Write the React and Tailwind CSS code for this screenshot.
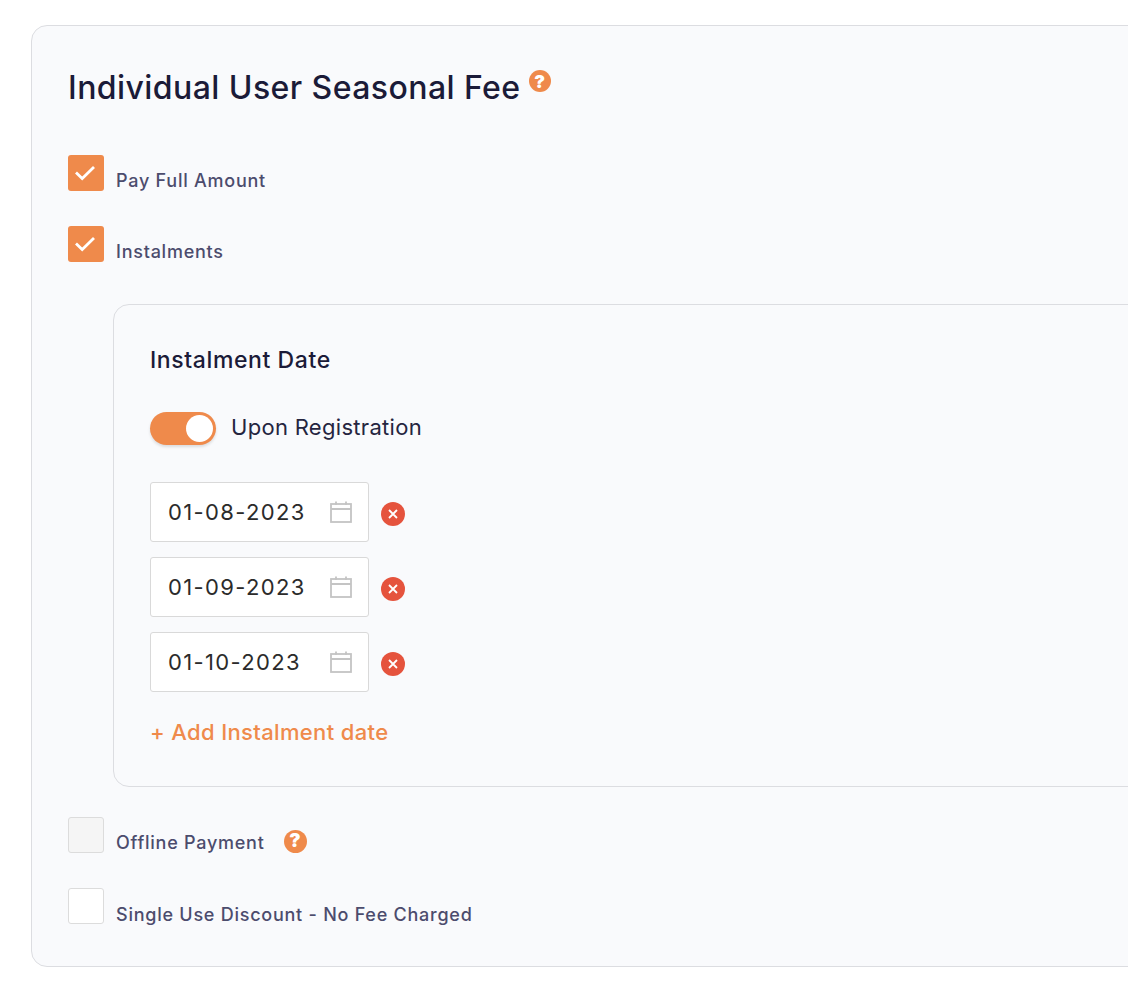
import React from "react";

const orange = "bg-[#ef8a4b]";

function Help({ className }) {
  return (
    <span className={`flex items-center justify-center rounded-full ${orange} text-white font-black ${className}`}>?</span>
  );
}

function Check({ checked, disabled, label, labelClass = "", children }) {
  return (
    <div className="flex items-end">
      <span
        className={`flex w-9 h-9 shrink-0 items-center justify-center rounded-[3px] ${
          checked ? orange : disabled ? "bg-[#f5f5f5] border border-[#dcdcdc]" : "bg-white border border-[#dcdcdc]"
        }`}
      >
        {checked && (
          <svg width="22" height="22" viewBox="0 0 22 22" fill="none" stroke="#fff" strokeWidth="2.8" className="-ml-[3px]">
            <path d="M2 10.5 L8.2 16.5 L20 5" />
          </svg>
        )}
      </span>
      <span className={`ml-3 -mb-px text-[18px] leading-[22px] tracking-[0.75px] font-[450] text-[#4c4c6d] ${labelClass}`}>{label}</span>
      {children}
    </div>
  );
}

function DateRow({ value }) {
  return (
    <div className="flex items-center">
      <div className="flex w-[219px] h-[60px] items-center justify-between bg-white border border-[#d9d9d9] rounded-[3px] pl-[17px] pr-[16px]">
        <span className="text-[22px] tracking-[1.35px] text-[#2b2b2b]">{value}</span>
        <svg width="22" height="22" viewBox="0 0 22 22" fill="none" stroke="#c4c4c4" strokeWidth="1.8">
          <rect x="1" y="3" width="20" height="18" />
          <path d="M1 8 H21 M6 0.5 V4 M16 0.5 V4" />
        </svg>
      </div>
      <span className="ml-3 mt-[3px] flex w-6 h-6 items-center justify-center rounded-full bg-[#e5533d]">
        <svg width="10" height="10" viewBox="0 0 10 10" stroke="#fff" strokeWidth="1.8">
          <path d="M1 1 L9 9 M9 1 L1 9" />
        </svg>
      </span>
    </div>
  );
}

export default function App() {
  return (
    <div className="h-[990px] w-[1128px] overflow-hidden bg-white pt-[25px] pl-[31px] font-['Inter',sans-serif]">
      <div className="w-[1200px] h-[942px] rounded-[16px] border border-[#dcdde1] bg-[#f9fafc] pt-[38px] pl-[36px]">
        <div className="flex items-start h-[48px]">
          <h1 className="text-[32px] leading-[48px] tracking-[0.43px] font-[450] text-[#1b1b38]">Individual User Seasonal Fee</h1>
          <Help className="ml-2 mt-[6px] w-[22px] h-[22px] text-[18px]" />
        </div>

        <div className="mt-[43px]">
          <Check checked label="Pay Full Amount" />
        </div>
        <div className="mt-[35px]">
          <Check checked label="Instalments" />
        </div>

        <div className="mt-[42px] ml-[45px] w-[1100px] h-[483px] rounded-[16px] border border-[#dcdde1] pl-[36px] pt-[41px]">
          <h2 className="text-[23px] leading-[28px] tracking-[0.6px] font-medium text-[#1b1b38]">Instalment Date</h2>
          <div className="mt-[38px] flex items-center">
            <span className={`flex w-[66px] h-[33px] items-center justify-end rounded-full ${orange} pr-[3px] shadow-[0_2px_3px_rgba(0,0,0,0.12)]`}>
              <span className="w-[27px] h-[27px] rounded-full bg-white" />
            </span>
            <span className="ml-[15px] -mt-[2px] text-[22px] tracking-[0.3px] text-[#25253f]">Upon Registration</span>
          </div>
          <div className="mt-[37px] flex flex-col gap-[15px]">
            <DateRow value="01-08-2023" />
            <DateRow value="01-09-2023" />
            <DateRow value="01-10-2023" />
          </div>
          <div className="mt-[26px] text-[22px] leading-[28px] tracking-[0.35px] font-[450] text-[#ef8a4b]">+ Add Instalment date</div>
        </div>

        <div className="mt-[30px]">
          <Check disabled label="Offline Payment">
            <Help className="ml-[19px] w-[23px] h-[23px] text-[19px]" />
          </Check>
        </div>
        <div className="mt-[35px]">
          <Check label="Single Use Discount - No Fee Charged" labelClass="translate-y-px" />
        </div>
      </div>
    </div>
  );
}
